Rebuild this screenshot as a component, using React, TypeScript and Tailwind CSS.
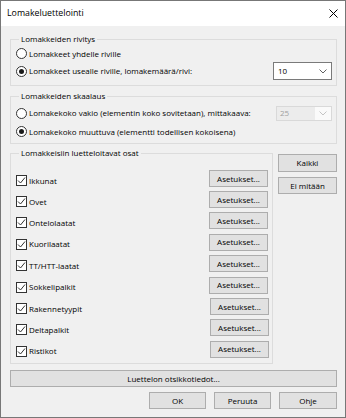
import React from 'react';

const font = { fontFamily: '"Open Sans", "Noto Sans", sans-serif' };

function Radio({ checked }: { checked?: boolean }) {
    return (
        <span className="w-[11px] h-[11px] rounded-full border border-[#333333] bg-white flex items-center justify-center shrink-0">
            {checked && <span className="w-[5px] h-[5px] rounded-full bg-[#1a1a1a]" />}
        </span>
    );
}

function Check() {
    return (
        <span className="w-[11px] h-[11px] border border-[#333333] bg-white flex items-center justify-center shrink-0">
            <svg width="9" height="9" viewBox="0 0 9 9">
                <polyline points="1,4.5 3.5,7 8,1.5" fill="none" stroke="#333333" strokeWidth="1" />
            </svg>
        </span>
    );
}

function Chevron({ color }: { color: string }) {
    return (
        <svg width="8" height="5" viewBox="0 0 8 5">
            <polyline points="0.5,0.5 4,4 7.5,0.5" fill="none" stroke={color} strokeWidth="1" />
        </svg>
    );
}

function Btn({ children, className = '' }: { children: React.ReactNode; className?: string }) {
    return (
        <button className={`h-[17px] bg-[#e1e1e1] border border-[#adadad] text-[8px] leading-none text-black flex items-center justify-center ${className}`}>
            {children}
        </button>
    );
}

const parts = [
    { name: 'Ikkunat', h: 'h-[21px]', shift: false },
    { name: 'Ovet', h: 'h-[21px]', shift: false },
    { name: 'Ontelolaatat', h: 'h-[21px]', shift: false },
    { name: 'Kuorilaatat', h: 'h-[22px]', shift: false },
    { name: 'TT/HTT-laatat', h: 'h-[21px]', shift: false },
    { name: 'Sokkelipalkit', h: 'h-[22px]', shift: false },
    { name: 'Rakennetyypit', h: 'h-[21px]', shift: true },
    { name: 'Deltapalkit', h: 'h-[21px]', shift: true },
    { name: 'Ristikot', h: 'h-[22px]', shift: true },
];

export default function App() {
    return (
        <div className="w-[346px] h-[418px] border border-[#777777] bg-[#f0f0f0] flex flex-col text-black" style={font}>
            {/* Title bar */}
            <div className="h-[25px] bg-white flex items-center justify-between pl-[6px] pr-[7px] shrink-0">
                <span className="text-[8.8px] leading-none">Lomakeluettelointi</span>
                <svg width="9" height="9" viewBox="0 0 9 9">
                    <line x1="0.5" y1="0.5" x2="8.5" y2="8.5" stroke="#000" strokeWidth="1" />
                    <line x1="8.5" y1="0.5" x2="0.5" y2="8.5" stroke="#000" strokeWidth="1" />
                </svg>
            </div>

            <div className="flex-1 flex flex-col pl-[9px] pr-[8px] pt-[7px] text-[8px]">
                {/* Lomakkeiden rivitys */}
                <fieldset className="border border-[#dcdcdc] px-[5px] pb-[5px]">
                    <legend className="ml-[3px] px-[2px] h-[12px] leading-[12px]">Lomakkeiden rivitys</legend>
                    <div className="h-[17px] flex items-center gap-[2px]">
                        <Radio />
                        <span>Lomakkeet yhdelle riville</span>
                    </div>
                    <div className="h-[18px] flex items-center gap-[2px]">
                        <Radio checked />
                        <span className="flex-1">Lomakkeet usealle riville, lomakemäärä/rivi:</span>
                        <div className="w-[59px] h-[18px] mr-[-1px] bg-white border border-[#7a7a7a] flex items-center justify-between pl-[4px] pr-[4px]">
                            <span>10</span>
                            <Chevron color="#606060" />
                        </div>
                    </div>
                </fieldset>

                {/* Lomakkeiden skaalaus */}
                <fieldset className="mt-[4px] border border-[#dcdcdc] px-[5px] pt-[2px] pb-[2px]">
                    <legend className="ml-[3px] px-[2px] h-[12px] leading-[12px]">Lomakkeiden skaalaus</legend>
                    <div className="h-[18px] flex items-center gap-[2px]">
                        <Radio />
                        <span className="flex-1">Lomakekoko vakio (elementin koko sovitetaan), mittakaava:</span>
                        <div className="w-[56px] h-[15px] mr-[-1px] bg-[#fafafa] border border-[#d9d9d9] flex items-center justify-between pr-[4px]">
                            <span className="h-full w-[38px] bg-[#ececec] text-[#a0a0a0] pl-[3px] flex items-center">25</span>
                            <Chevron color="#c4c4c4" />
                        </div>
                    </div>
                    <div className="h-[19px] flex items-center gap-[2px]">
                        <Radio checked />
                        <span>Lomakekoko muuttuva (elementti todellisen kokoisena)</span>
                    </div>
                </fieldset>

                {/* Lomakkeisiin luetteloitavat osat */}
                <div className="mt-[3px] flex">
                    <fieldset className="w-[263px] border border-[#dcdcdc] pl-[5px] pr-[4px] pt-[11px] pb-[1px]">
                        <legend className="ml-[3px] px-[2px] h-[12px] leading-[12px]">Lomakkeisiin luetteloitavat osat</legend>
                        {parts.map((p) => (
                            <div key={p.name} className={`${p.h} flex items-center gap-[2px]`}>
                                <Check />
                                <span className="flex-1">{p.name}</span>
                                <Btn className={`w-[59px] mb-[4px] ${p.shift ? 'mr-[-1px]' : ''}`}>Asetukset...</Btn>
                            </div>
                        ))}
                    </fieldset>
                    <div className="ml-[5px] pt-[7px] flex-1 flex flex-col">
                        <Btn className="h-[18px] border-[#0078d7]">Kaikki</Btn>
                        <Btn className="mt-[5px]">Ei mitään</Btn>
                    </div>
                </div>

                <Btn className="mt-[6px] w-full">Luettelon otsikkotiedot...</Btn>

                <div className="mt-[5px] flex justify-end gap-[8px]">
                    <Btn className="w-[57px]">OK</Btn>
                    <Btn className="w-[57px]">Peruuta</Btn>
                    <Btn className="w-[58px]">Ohje</Btn>
                </div>
            </div>
        </div>
    );
}
